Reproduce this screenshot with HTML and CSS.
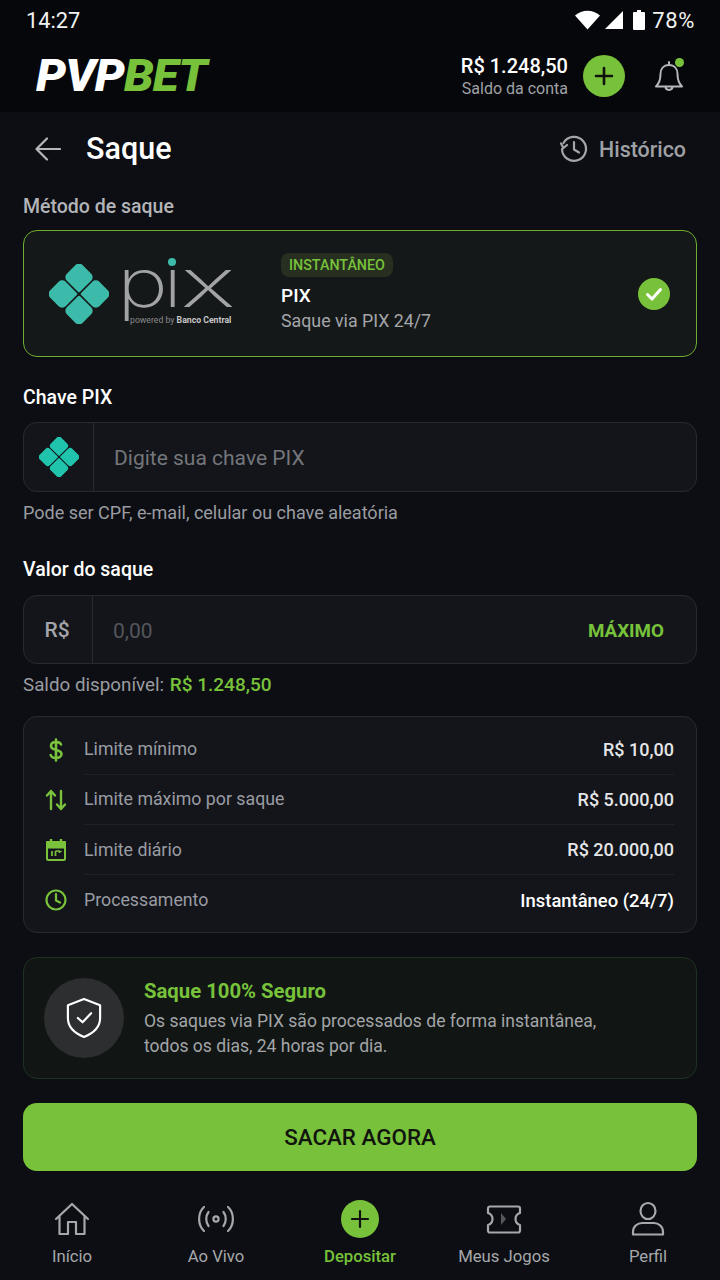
FILE: index.html
```html
<!DOCTYPE html>
<html lang="pt-BR">
<head>
  <meta charset="UTF-8">
  <meta name="viewport" content="width=device-width, initial-scale=1.0">
  <title>Saque</title>
  <link rel="stylesheet" href="styles.css">
</head>
<body>
  <svg class="defs" width="0" height="0">
    <defs>
      <path id="pix-piece" d="M12 7H24.200A5 5 0 0 1 29.200 12V27.700A1.500 1.500 0 0 1 27.700 29.200H12A5 5 0 0 1 7 24.200V12A5 5 0 0 1 12 7Z"/>
      <g id="pix-mark">
        <g transform="rotate(45 30 30)">
          <use href="#pix-piece"/>
          <use href="#pix-piece" transform="rotate(90 30 30)"/>
          <use href="#pix-piece" transform="rotate(180 30 30)"/>
          <use href="#pix-piece" transform="rotate(270 30 30)"/>
        </g>
      </g>
    </defs>
  </svg>

  <div class="top">
    <div class="status">
      <span class="time">14:27</span>
      <div class="status-right">
        <svg width="25" height="20" viewBox="0 0 25 20" fill="#fff"><path d="M0 5.500C3.500 2.300 8 .7 12.500 .7S21.500 2.300 25 5.500L12.500 19.500Z"/></svg>
        <svg class="signal" width="20" height="20" viewBox="0 0 20 20" fill="#fff"><path d="M19 1V19H1Z"/></svg>
        <svg class="cell" width="12" height="20" viewBox="0 0 12 20" fill="#fff"><path d="M4 0H8V2H11A1 1 0 0 1 12 3V19A1 1 0 0 1 11 20H1A1 1 0 0 1 0 19V3A1 1 0 0 1 1 2H4Z"/></svg>
        <span class="battery">78%</span>
      </div>
    </div>
    <header class="app-bar">
      <div class="logo"><b>PVP<span>BET</span></b></div>
      <div class="balance">
        <strong>R$ 1.248,50</strong>
        <small>Saldo da conta</small>
      </div>
      <button class="add-btn">
        <svg width="20" height="20" viewBox="0 0 20 20" stroke="#10130d" stroke-width="2.600" stroke-linecap="round"><path d="M10 2V18M2 10H18"/></svg>
      </button>
      <div class="bell">
        <svg width="32" height="36" viewBox="0 0 32 36" fill="none" stroke="#b5b7ba" stroke-width="2" stroke-linejoin="round" stroke-linecap="round"><path d="M16 4V7M16 7C10.500 7 7.500 11 7.500 16C7.500 22 6.500 25 3 28.500H29C25.500 25 24.500 22 24.500 16C24.500 11 21.500 7 16 7ZM12.500 28.500C12.500 33 19.500 33 19.500 28.500"/></svg>
        <i class="bell-dot"></i>
      </div>
    </header>
  </div>

  <main class="page">
    <div class="title-row">
      <svg width="26" height="24" viewBox="0 0 26 24" fill="none" stroke="#b5b7ba" stroke-width="2.200" stroke-linecap="round" stroke-linejoin="round"><path d="M25 12H1.500M12 1.500L1.500 12L12 22.500"/></svg>
      <h1>Saque</h1>
      <div class="history">
        <svg width="30" height="30" viewBox="0 0 30 30" fill="none" stroke="#a3a5a9" stroke-width="2.200" stroke-linecap="round" stroke-linejoin="round"><path d="M4.500 9A12 12 0 1 1 3 15M2 9.500L4.500 14L8 11M15 8V15.500L20 18.500"/></svg>
        <span>Histórico</span>
      </div>
    </div>

    <h2 class="label muted">Método de saque</h2>
    <section class="method">
      <div class="pix-logo">
        <svg class="pix-mark" width="60" height="60" viewBox="0 0 60 60" fill="#3dbbaa"><use href="#pix-mark"/></svg>
        <div class="pix-word">
          <span class="pix-text">pı<span>x</span></span>
          <i class="pix-dot"></i>
          <small>powered by <b>Banco Central</b></small>
        </div>
      </div>
      <div class="method-info">
        <span class="tag">INSTANTÂNEO</span>
        <strong>PIX</strong>
        <small>Saque via PIX 24/7</small>
      </div>
      <span class="check">
        <svg width="20" height="20" viewBox="0 0 20 20" fill="none" stroke="#fff" stroke-width="3" stroke-linecap="round" stroke-linejoin="round"><path d="M3.500 10.500L8 15L16.500 5.500"/></svg>
      </span>
    </section>

    <h2 class="label pix-label">Chave PIX</h2>
    <div class="field key-field">
      <div class="field-icon">
        <svg width="40" height="40" viewBox="0 0 60 60" fill="#20c4ac"><use href="#pix-mark"/></svg>
      </div>
      <span class="placeholder">Digite sua chave PIX</span>
    </div>
    <p class="hint">Pode ser CPF, e-mail, celular ou chave aleatória</p>

    <h2 class="label value-label">Valor do saque</h2>
    <div class="field value-field">
      <div class="field-icon currency">R$</div>
      <span class="placeholder zero">0,00</span>
      <span class="max">MÁXIMO</span>
    </div>
    <p class="available">Saldo disponível: <b>R$ 1.248,50</b></p>

    <section class="limits">
      <div class="limit">
        <svg width="24" height="24" viewBox="0 0 24 24" fill="none" stroke="#7ac23b" stroke-width="2.600" stroke-linecap="round" stroke-linejoin="round"><path d="M12 1.500V22.500M17 6.500C16.500 4.800 14.500 4 12 4C9 4 7 5.500 7 8C7 13.500 17.500 10.500 17.500 16C17.500 18.500 15 20 12 20C9.200 20 7.300 19 6.700 17"/></svg>
        <span>Limite mínimo</span>
        <b>R$ 10,00</b>
      </div>
      <div class="limit">
        <svg width="24" height="24" viewBox="0 0 24 24" fill="none" stroke="#7ac23b" stroke-width="2.400" stroke-linecap="round" stroke-linejoin="round"><path d="M7 21V3M3 7.500L7 3L11 7.500M17 3V21M13 16.500L17 21L21 16.500"/></svg>
        <span>Limite máximo por saque</span>
        <b>R$ 5.000,00</b>
      </div>
      <div class="limit">
        <svg width="24" height="24" viewBox="0 0 24 24" fill="none" stroke="#7ac23b" stroke-width="2" stroke-linejoin="round"><rect x="3" y="4" width="18" height="18" rx="1.500"/><path d="M3 4H21V9.500H3Z" fill="#7ac23b"/><path d="M7 1V5M17 1V5" stroke-width="2.400"/><path d="M8 13V18M11.500 13V18M11.500 13H15.500V15M17 13V14" stroke-width="1.700"/></svg>
        <span>Limite diário</span>
        <b>R$ 20.000,00</b>
      </div>
      <div class="limit">
        <svg width="24" height="24" viewBox="0 0 24 24" fill="none" stroke="#7ac23b" stroke-width="2.200" stroke-linecap="round" stroke-linejoin="round"><circle cx="12" cy="12" r="9.500"/><path d="M12 6V12.500L16 14.500"/></svg>
        <span>Processamento</span>
        <b class="white">Instantâneo (24/7)</b>
      </div>
    </section>

    <section class="secure">
      <div class="secure-icon">
        <svg width="36" height="42" viewBox="0 0 38 44" fill="none" stroke="#fff" stroke-width="2.300" stroke-linecap="round" stroke-linejoin="round"><path d="M19 2L36 8.500V22C36 31 29 38 19 42C9 38 2 31 2 22V8.500ZM12.500 22L17.500 26.500L26.500 17"/></svg>
      </div>
      <div class="secure-text">
        <h3>Saque 100% Seguro</h3>
        <p>Os saques via PIX são processados de forma instantânea,<br>todos os dias, 24 horas por dia.</p>
      </div>
    </section>

    <button class="submit">SACAR AGORA</button>
  </main>

  <nav class="tabs">
    <a class="tab">
      <svg width="38" height="36" viewBox="0 0 38 36" fill="none" stroke="#a6a8ab" stroke-width="2.200" stroke-linecap="round" stroke-linejoin="round"><path d="M3 18L19 3L35 18M6.500 15V33H15V21H23V33H31.500V15"/></svg>
      <span>Início</span>
    </a>
    <a class="tab">
      <svg width="38" height="36" viewBox="0 0 38 36" fill="none" stroke="#a6a8ab" stroke-width="2.200" stroke-linecap="round"><circle cx="19" cy="18" r="2.600"/><path d="M11.500 11C8.500 15 8.500 21 11.500 25M26.500 11C29.500 15 29.500 21 26.500 25M7 6C.5 12 .5 24 7 30M31 6C37.500 12 37.500 24 31 30"/></svg>
      <span>Ao Vivo</span>
    </a>
    <a class="tab active">
      <span class="tab-add">
        <svg width="20" height="20" viewBox="0 0 20 20" stroke="#10130d" stroke-width="2.200" stroke-linecap="round"><path d="M10 2V18M2 10H18"/></svg>
      </span>
      <span>Depositar</span>
    </a>
    <a class="tab">
      <svg width="38" height="36" viewBox="0 0 38 36" fill="none" stroke="#a6a8ab" stroke-width="2.200" stroke-linejoin="round"><path d="M5 5.500H33A2 2 0 0 1 35 7.500V12C29 14 29 22 35 24V29.500A2 2 0 0 1 33 31.500H5A2 2 0 0 1 3 29.500V24C9 22 9 14 3 12V7.500A2 2 0 0 1 5 5.500Z"/><path d="M16 12L21 18L16 24Z" fill="#55575a" stroke="none"/></svg>
      <span>Meus Jogos</span>
    </a>
    <a class="tab">
      <svg width="38" height="36" viewBox="0 0 38 36" fill="none" stroke="#a6a8ab" stroke-width="2.200" stroke-linejoin="round"><ellipse cx="19" cy="10" rx="7.500" ry="8"/><path d="M4 33.500V31C4 25 9 22 13 22H25C29 22 34 25 34 31V33.500Z"/></svg>
      <span>Perfil</span>
    </a>
  </nav>
</body>
</html>
```

FILE: styles.css
```css
* {
  box-sizing: border-box;
}

html, body {
  margin: 0;
  padding: 0;
}

body {
  width: 720px;
  height: 1280px;
  overflow: hidden;
  display: flex;
  flex-direction: column;
  font-family: Roboto, "Noto Sans", sans-serif;
  color: #fff;
  background-color: #0c0e13;
}

h1, h2, h3, p {
  margin: 0;
}

.defs {
  position: absolute;
}

.top {
  background-color: #05070b;
}

.status {
  height: 40px;
  padding: 0 25px 0 26px;
  display: flex;
  align-items: center;
  justify-content: space-between;
}

.time {
  font-size: 21.800px;
  color: #f2f2f2;
}

.status-right {
  display: flex;
  align-items: center;
}

.signal {
  margin-left: 4px;
}

.cell {
  margin-left: 9px;
}

.battery {
  font-size: 22px;
  letter-spacing: .6px;
  margin-left: 7px;
  color: #f2f2f2;
}

.app-bar {
  height: 72px;
  display: flex;
  align-items: center;
  padding: 0 35px 0 36px;
}

.logo {
  flex: 1;
  font-size: 44px;
  font-style: italic;
  letter-spacing: -.8px;
  color: #fff;
}

.logo b {
  display: inline-block;
  font-weight: 900;
  transform: scaleX(1.08);
  transform-origin: left center;
}

.logo span {
  color: #78c23b;
}

.balance {
  display: flex;
  flex-direction: column;
  align-items: flex-end;
  margin-right: 15px;
}

.balance strong {
  font-size: 20px;
  font-weight: 500;
  line-height: 24px;
}

.balance small {
  font-size: 16px;
  line-height: 21px;
  color: #a0a2a6;
}

.add-btn {
  width: 42px;
  height: 42px;
  padding: 0;
  border: none;
  border-radius: 50%;
  background-color: #78c23b;
  display: flex;
  align-items: center;
  justify-content: center;
}

.bell {
  position: relative;
  width: 32px;
  height: 36px;
  margin-left: 28px;
}

.bell-dot {
  position: absolute;
  top: 0;
  right: 1px;
  width: 9px;
  height: 9px;
  border-radius: 50%;
  background-color: #78c23b;
}

.page {
  flex: 1;
  padding: 0 23px;
  min-height: 0;
}

.title-row {
  height: 74px;
  padding: 0 11px 0 12px;
  display: flex;
  align-items: center;
}

.title-row h1 {
  flex: 1;
  margin-left: 25px;
  font-size: 30.500px;
  font-weight: 500;
  line-height: 72px;
}

.history {
  display: flex;
  align-items: center;
  gap: 10px;
  font-size: 21.400px;
  font-weight: 500;
  color: #9fa1a5;
}

.label {
  font-size: 19.500px;
  font-weight: 500;
  line-height: 24px;
}

.muted {
  margin-top: 9px;
  color: #b2b4b8;
}

.method {
  height: 127px;
  margin-top: 11px;
  padding: 0 26px 0 25px;
  display: flex;
  align-items: center;
  border: 1px solid #6cae30;
  border-radius: 14px;
  background-color: #151818;
}

.pix-logo {
  width: 232px;
  display: flex;
  align-items: center;
  gap: 13px;
}

.pix-word {
  position: relative;
  width: 112px;
  height: 60px;
}

.pix-text {
  position: absolute;
  left: -5px;
  top: -24px;
  font-family: Inter, sans-serif;
  font-size: 68px;
  font-weight: 200;
  line-height: 84px;
  letter-spacing: -4px;
  color: #a2a3a4;
  transform: scaleX(1.27);
  transform-origin: left center;
}

.pix-text span {
  display: inline-block;
  margin-left: 3px;
  transform: scaleX(1.24);
  transform-origin: left center;
}

.pix-dot {
  position: absolute;
  left: 46px;
  top: -6px;
  width: 8px;
  height: 8px;
  border-radius: 50%;
  background-color: #3dbbaa;
}

.pix-word small {
  position: absolute;
  left: 8px;
  bottom: -1px;
  font-size: 8.700px;
  line-height: 10px;
  white-space: nowrap;
  color: #8a8b8c;
}

.pix-word b {
  color: #c6c7c8;
}

.method-info {
  flex: 1;
  padding-bottom: 2px;
  display: flex;
  flex-direction: column;
  align-items: flex-start;
}

.tag {
  height: 24px;
  padding: 0 8px;
  border-radius: 8px;
  font-size: 14.300px;
  font-weight: 500;
  line-height: 24px;
  color: #78c23b;
  background-color: #262f20;
}

.method-info strong {
  margin-top: 7px;
  font-size: 19px;
  font-weight: 500;
  line-height: 24px;
}

.method-info small {
  margin-top: 1px;
  font-size: 17.800px;
  line-height: 24px;
  color: #a3a5a8;
}

.check {
  width: 32px;
  height: 32px;
  border-radius: 50%;
  background-color: #78c23b;
  display: flex;
  align-items: center;
  justify-content: center;
}

.pix-label {
  margin-top: 29px;
}

.field {
  display: flex;
  align-items: center;
  margin-top: 12px;
  border: 1px solid #282a31;
  border-radius: 14px;
  background-color: #13151a;
}

.key-field {
  height: 70px;
}

.value-field {
  height: 69px;
  margin-top: 13px;
}

.field-icon {
  width: 70px;
  height: 100%;
  flex-shrink: 0;
  border-right: 1px solid #282a31;
  display: flex;
  align-items: center;
  justify-content: center;
}

.currency {
  width: 69px;
  padding-right: 2px;
  font-size: 21px;
  font-weight: 500;
  color: #a3a5a8;
}

.placeholder {
  flex: 1;
  padding: 2px 0 0 20px;
  font-size: 21px;
  color: #74767b;
}

.zero {
  color: #54565b;
}

.max {
  padding: 2px 32px 0 0;
  font-size: 18.800px;
  font-weight: 700;
  color: #78c23b;
}

.hint {
  margin-top: 10px;
  font-size: 18px;
  line-height: 22px;
  color: #9a9ca1;
}

.value-label {
  margin-top: 34px;
}

.available {
  margin-top: 10px;
  font-size: 18.800px;
  line-height: 22px;
  color: #9a9ca1;
}

.available b {
  margin-left: 1px;
  font-size: 19px;
  font-weight: 500;
  color: #78c23b;
}

.limits {
  height: 217px;
  margin-top: 20px;
  padding: 7.600px 22px 8px 21px;
  border: 1px solid #282a31;
  border-radius: 14px;
  background-color: #13151a;
}

.limit {
  height: 50.200px;
  display: flex;
  align-items: center;
  font-size: 17.750px;
  color: #9a9ca3;
}

.limit svg {
  flex-shrink: 0;
  margin-left: -1px;
}

.limit span {
  flex: 1;
  align-self: stretch;
  margin-left: 16px;
  display: flex;
  align-items: center;
  border-bottom: 1px solid #1f2127;
}

.limit b {
  align-self: stretch;
  display: flex;
  align-items: center;
  border-bottom: 1px solid #1f2127;
  font-size: 18px;
  font-weight: 500;
  color: #e4e5e6;
}

.limit:last-child span,
.limit:last-child b {
  border-bottom: none;
}

.limit .white {
  font-size: 18.400px;
  color: #fff;
}

.secure {
  height: 122px;
  margin-top: 24px;
  padding: 0 20px;
  display: flex;
  align-items: center;
  gap: 20px;
  border: 1px solid #1d3220;
  border-radius: 14px;
  background-color: #111614;
}

.secure-icon {
  width: 80px;
  height: 80px;
  flex-shrink: 0;
  border-radius: 50%;
  background-color: #2c2e30;
  display: flex;
  align-items: center;
  justify-content: center;
}

.secure h3 {
  font-size: 20.300px;
  font-weight: 700;
  line-height: 26px;
  color: #78c23b;
}

.secure p {
  margin-top: 5px;
  font-size: 17.550px;
  line-height: 25px;
  color: #a3a5a8;
}

.submit {
  display: block;
  width: 100%;
  height: 68px;
  margin-top: 24px;
  padding: 0;
  border: none;
  border-radius: 14px;
  background-color: #78c23b;
  font-family: Roboto, sans-serif;
  font-size: 22.400px;
  font-weight: 500;
  color: #11140e;
}

.tabs {
  height: 90px;
  padding-top: 11px;
  display: grid;
  grid-template-columns: repeat(5, 1fr);
}

.tab {
  display: flex;
  flex-direction: column;
  align-items: center;
  gap: 10px;
  font-size: 16.700px;
  line-height: 20px;
  color: #a6a8ab;
}

.tab.active {
  color: #78c23b;
  font-weight: 500;
}

.tab-add {
  width: 38px;
  height: 38px;
  margin: -1px 0;
  border-radius: 50%;
  background-color: #78c23b;
  display: flex;
  align-items: center;
  justify-content: center;
}
```
